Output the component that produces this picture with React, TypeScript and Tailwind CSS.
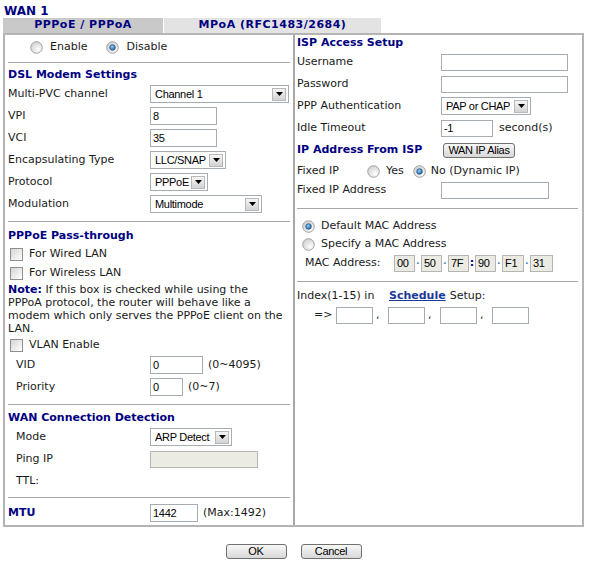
import type { ReactNode } from "react";

const LABEL = "font-['DejaVu_Sans',Verdana,sans-serif] text-[11px] text-[#1a1a1a]";
const FIELD = "font-['Liberation_Sans',Arial,sans-serif] text-[11px] tracking-[-0.3px] text-black";

function Radio({ checked = false }: { checked?: boolean }) {
  return (
    <svg width="13" height="13" viewBox="0 0 13 13" className="shrink-0">
      <defs>
        <radialGradient id="rb" cx="0.65" cy="0.7" r="0.7">
          <stop offset="0" stopColor="#ffffff" />
          <stop offset="1" stopColor="#d2d2d2" />
        </radialGradient>
        <radialGradient id="rd" cx="0.4" cy="0.35" r="0.7">
          <stop offset="0" stopColor="#8fd0ff" />
          <stop offset="1" stopColor="#1d5e9e" />
        </radialGradient>
      </defs>
      <circle cx="6.5" cy="6.5" r="5.8" fill="url(#rb)" stroke="#a3a3a3" strokeWidth="1" />
      {checked && <circle cx="6.5" cy="6.5" r="2.8" fill="url(#rd)" stroke="#24527f" strokeWidth="0.8" />}
    </svg>
  );
}

function Checkbox() {
  return (
    <span className="block h-[13px] w-[13px] shrink-0 border border-[#8f8f8f] bg-linear-to-br from-[#d6d6d6] to-white" />
  );
}

function Select({ value, w }: { value: string; w: string }) {
  return (
    <div className={`flex h-[18px] items-center justify-between border border-[#a5acb2] bg-white pl-[4px] pr-[2px] ${FIELD} ${w}`}>
      <span>{value}</span>
      <span className="flex h-[13px] w-[14px] items-center justify-center border border-[#b8b8b8] bg-linear-to-b from-[#f6f6f6] to-[#d2d2d2]">
        <svg width="7" height="4" viewBox="0 0 7 4">
          <path d="M0 0h7L3.5 4z" fill="#000" />
        </svg>
      </span>
    </div>
  );
}

function Input({ value = "", w, h = "h-[18px]", disabled = false }: { value?: string; w: string; h?: string; disabled?: boolean }) {
  return (
    <div
      className={`flex items-center border pl-[2px] ${FIELD} ${w} ${h} ${
        disabled ? "border-[#b5b5b5] bg-[#ebebe4] text-[#555]" : "border-[#a5acb2] bg-white"
      }`}
    >
      {value}
    </div>
  );
}

function Row({ label, indent = false, h = "h-[22px]", children }: { label: ReactNode; indent?: boolean; h?: string; children?: ReactNode }) {
  return (
    <div className={`flex items-center ${h}`}>
      <div className={`w-[142px] shrink-0 ${indent ? "pl-[8px]" : ""} ${LABEL}`}>{label}</div>
      <div className="flex items-center gap-[5px]">{children}</div>
    </div>
  );
}

function RRow({ label, h = "h-[22px]", children }: { label: ReactNode; h?: string; children?: ReactNode }) {
  return (
    <div className={`flex items-center ${h}`}>
      <div className={`w-[144px] shrink-0 ${LABEL}`}>{label}</div>
      <div className="flex items-center gap-[6px]">{children}</div>
    </div>
  );
}

function Heading({ children, className = "" }: { children: ReactNode; className?: string }) {
  return (
    <div className={`flex items-center font-['DejaVu_Sans',Verdana,sans-serif] text-[11px] font-bold text-[#000080] ${className}`}>
      {children}
    </div>
  );
}

function Hr({ className = "" }: { className?: string }) {
  return <div className={`h-px bg-[#a8a8a8] ${className}`} />;
}

function Btn({ children, w }: { children: ReactNode; w: string }) {
  return (
    <button
      type="button"
      className={`flex h-[15px] items-center justify-center rounded-[3px] border border-[#707070] bg-linear-to-b from-[#f8f8f8] to-[#d8d8d8] ${FIELD} leading-none ${w}`}
    >
      {children}
    </button>
  );
}

function Dot() {
  return <span className="w-[6px] text-center font-['Liberation_Sans',Arial,sans-serif] text-[11px] font-bold text-[#3a7fc0]">·</span>;
}

export default function App() {
  return (
    <div className="w-[590px] bg-white pl-[3px]">
      <div className="flex h-[18px] items-center pl-[1px] pt-[3px] font-['DejaVu_Sans',Verdana,sans-serif] text-[12px] font-bold text-[#000080]">
        WAN 1
      </div>

      <div className="flex h-[15px] font-['DejaVu_Sans',Verdana,sans-serif] text-[11px] font-bold tracking-[0.5px] text-[#000080]">
        <div className="flex w-[160px] items-center justify-center bg-[#c9c9c9]">PPPoE / PPPoA</div>
        <div className="ml-px flex w-[217px] items-center justify-center bg-[#e3e3e3]">MPoA (RFC1483/2684)</div>
      </div>

      <div className="flex w-[581px] border-2 border-[#b4b4b4]">
        {/* left column */}
        <div className="w-[288px] pl-[3px] pr-[3px]">
          <div className={`flex h-[24px] items-center pl-[22px] ${LABEL}`}>
            <Radio />
            <span className="ml-[7px]">Enable</span>
            <span className="ml-[19px]">
              <Radio checked />
            </span>
            <span className="ml-[7px]">Disable</span>
          </div>
          <Hr className="mt-[3px]" />
          <Heading className="mt-[4px] h-[16px]">DSL Modem Settings</Heading>
          <Row label="Multi-PVC channel">
            <Select value="Channel 1" w="w-[139px]" />
          </Row>
          <Row label="VPI">
            <Input value="8" w="w-[67px]" />
          </Row>
          <Row label="VCI">
            <Input value="35" w="w-[67px]" />
          </Row>
          <Row label="Encapsulating Type">
            <Select value="LLC/SNAP" w="w-[76px]" />
          </Row>
          <Row label="Protocol">
            <Select value="PPPoE" w="w-[58px]" />
          </Row>
          <Row label="Modulation">
            <Select value="Multimode" w="w-[112px]" />
          </Row>
          <Hr className="mt-[6px]" />
          <Heading className="mt-[6px] h-[17px]">PPPoE Pass-through</Heading>
          <div className={`flex h-[19px] items-center gap-[6px] pl-[2px] ${LABEL}`}>
            <Checkbox />
            For Wired LAN
          </div>
          <div className={`flex h-[19px] items-center gap-[6px] pl-[2px] ${LABEL}`}>
            <Checkbox />
            For Wireless LAN
          </div>
          <p className={`whitespace-nowrap leading-[13px] ${LABEL}`}>
            <b className="text-[#000080]">Note:</b> If this box is checked while using the
            <br />
            PPPoA protocol, the router will behave like a
            <br />
            modem which only serves the PPPoE client on the
            <br />
            LAN.
          </p>
          <div className={`mt-[2px] flex h-[17px] items-center gap-[6px] pl-[2px] ${LABEL}`}>
            <Checkbox />
            VLAN Enable
          </div>
          <Row label="VID" indent>
            <Input value="0" w="w-[53px]" />
            <span className={LABEL}>(0~4095)</span>
          </Row>
          <Row label="Priority" indent>
            <Input value="0" w="w-[33px]" />
            <span className={LABEL}>(0~7)</span>
          </Row>
          <Hr className="mt-[6px]" />
          <Heading className="mt-[5px] h-[16px]">WAN Connection Detection</Heading>
          <Row label="Mode" indent>
            <Select value="ARP Detect" w="w-[82px]" />
          </Row>
          <Row label="Ping IP" indent>
            <Input w="w-[108px]" h="h-[17px]" disabled />
          </Row>
          <Row label="TTL:" indent />
          <Hr className="mt-[5px]" />
          <Row label={<b className="text-[#000080]">MTU</b>} h="mt-[4px] h-[22px]">
            <Input value="1442" w="w-[48px]" />
            <span className={LABEL}>(Max:1492)</span>
          </Row>
          <div className="h-px" />
        </div>

        <div className="w-[2px] bg-[#a8a8a8]" />

        {/* right column */}
        <div className="flex-1 pl-[2px] pr-[4px]">
          <Heading className="h-[16px]">ISP Access Setup</Heading>
          <RRow label="Username">
            <Input w="w-[127px]" h="h-[17px]" />
          </RRow>
          <RRow label="Password">
            <Input w="w-[127px]" h="h-[17px]" />
          </RRow>
          <RRow label="PPP Authentication">
            <Select value="PAP or CHAP" w="w-[90px]" />
          </RRow>
          <RRow label="Idle Timeout">
            <Input value="-1" w="w-[52px]" h="h-[17px]" />
            <span className={LABEL}>second(s)</span>
          </RRow>
          <div className="flex h-[22px] items-center">
            <Heading className="w-[146px]">IP Address From ISP</Heading>
            <Btn w="w-[72px]">WAN IP Alias</Btn>
          </div>
          <div className={`flex h-[20px] items-center ${LABEL}`}>
            <span className="w-[70px]">Fixed IP</span>
            <Radio />
            <span className="ml-[6px]">Yes</span>
            <span className="ml-[9px]">
              <Radio checked />
            </span>
            <span className="ml-[5px]">No (Dynamic IP)</span>
          </div>
          <RRow label="Fixed IP Address" h="h-[19px]">
            <Input w="w-[108px]" h="h-[17px]" />
          </RRow>
          <Hr className="mt-[8px]" />
          <div className={`mt-[8px] flex h-[18px] items-center gap-[6px] pl-[5px] ${LABEL}`}>
            <Radio checked />
            Default MAC Address
          </div>
          <div className={`flex h-[19px] items-center gap-[6px] pl-[5px] ${LABEL}`}>
            <Radio />
            Specify a MAC Address
          </div>
          <div className={`flex h-[18px] items-center pl-[8px] ${LABEL}`}>
            <span className="w-[89px]">MAC Address:</span>
            <Input value="00" w="w-[21px]" h="h-[17px]" disabled />
            <Dot />
            <Input value="50" w="w-[21px]" h="h-[17px]" disabled />
            <Dot />
            <Input value="7F" w="w-[21px]" h="h-[17px]" disabled />
            <span className="w-[6px] text-center font-bold text-[#000080]">:</span>
            <Input value="90" w="w-[21px]" h="h-[17px]" disabled />
            <Dot />
            <Input value="F1" w="w-[22px]" h="h-[17px]" disabled />
            <Dot />
            <Input value="31" w="w-[23px]" h="h-[17px]" disabled />
          </div>
          <Hr className="mt-[9px]" />
          <div className={`mt-[6px] flex h-[16px] items-center ${LABEL}`}>
            <span className="w-[92px]">Index(1-15) in</span>
            <a className="mr-[4px] font-bold text-[#1a3a99] underline">Schedule</a>
            Setup:
          </div>
          <div className={`mt-[2px] flex h-[19px] items-center pl-[17px] ${LABEL}`}>
            <span className="w-[22px]">=&gt;</span>
            {[0, 1, 2, 3].map((i) => (
              <span key={i} className="flex items-center">
                <Input w="w-[37px]" h="h-[17px]" />
                {i < 3 && <span className="w-[15px] pl-[3px]">,</span>}
              </span>
            ))}
          </div>
        </div>
      </div>

      <div className="mt-[17px] flex w-[581px] justify-center gap-[14px]">
        <Btn w="w-[61px]">OK</Btn>
        <Btn w="w-[61px]">Cancel</Btn>
      </div>
    </div>
  );
}
